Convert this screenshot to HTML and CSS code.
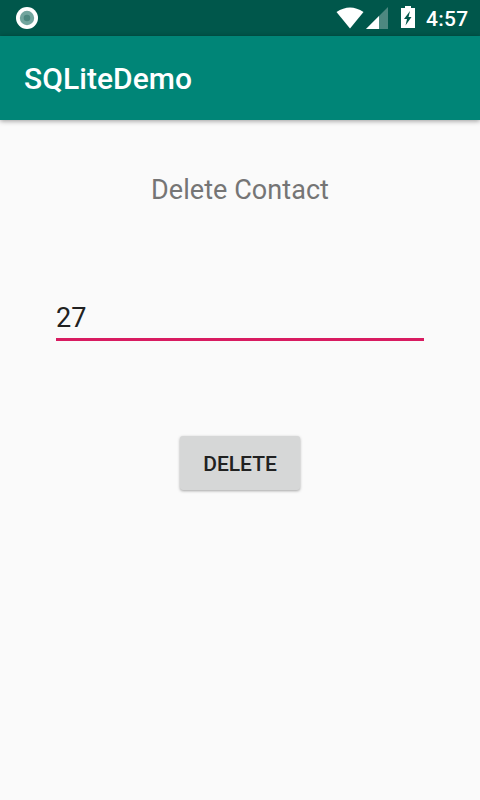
FILE: index.html
```html
<!DOCTYPE html>
<html lang="en">
<head>
<meta charset="utf-8">
<title>SQLiteDemo</title>
<link rel="stylesheet" href="styles.css">
</head>
<body>
<div class="status">
  <svg class="dot" width="24" height="24" viewBox="0 0 24 24"><circle cx="12" cy="12" r="11" fill="#fff"/><circle cx="12" cy="12" r="7.2" fill="#72a59e"/><circle cx="12" cy="12" r="3.300" fill="#4d8880"/></svg>
  <svg class="signals" width="80" height="24" viewBox="336 6 80 24"><path d="M336.500 12Q350 3 363.500 12L350 28.500Z" fill="#fff"/><path d="M388 7V29H366Z" fill="#4d8880"/><path d="M379 16V29H366Z" fill="#fff"/><path fill-rule="evenodd" d="M405 6h6v2h4v20h-14V8h4zM410 11l-6 8h3l-1.500 6.500 6-8.500h-3z" fill="#fff"/></svg>
  <span class="time">4:57</span>
</div>
<header class="bar">SQLiteDemo</header>
<main class="content">
  <h1 class="heading">Delete Contact</h1>
  <div class="field">27</div>
  <button class="delete">DELETE</button>
</main>
</body>
</html>
```
FILE: styles.css
```css
* { box-sizing: border-box; }
body { margin: 0; height: 800px; background: #fafafa; font-family: Roboto, sans-serif; overflow: hidden; }
.status { height: 36px; background: #00574b; display: flex; align-items: center; padding: 0 12px 0 15px; color: #fff; }
.dot { display: block; }
.signals { display: block; margin-left: auto; }
.time { width: 42px; margin-left: 10px; padding-top: 2px; font-size: 21px; font-weight: 500; line-height: 34px; letter-spacing: .25px; }
.bar { height: 84px; padding: 1px 24px 0; line-height: 84px; background: #008577; color: #fff; font-size: 30px; font-weight: 500; letter-spacing: .05px; box-shadow: 0 1px 5px rgba(0,0,0,.4); }
.content { display: flex; flex-direction: column; align-items: center; }
.heading { margin: 52px 0 0; font-size: 27px; font-weight: 400; line-height: 36px; letter-spacing: .06px; color: #757575; }
.field { width: 368px; height: 46px; margin-top: 87px; padding-top: 1px; border-bottom: 3px solid #d81b60; font-size: 27px; line-height: 44px; color: #212121; }
.delete { width: 120px; height: 54px; margin-top: 95px; padding: 2px 0 0; border: 0; border-radius: 3px; background: #d6d7d7; color: #212121; font: 500 21px Roboto, sans-serif; box-shadow: 0 1px 3px rgba(0,0,0,.35); }
```
